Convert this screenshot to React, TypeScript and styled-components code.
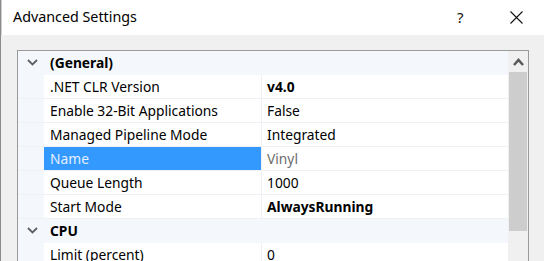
import React from 'react';
import styled, { createGlobalStyle } from 'styled-components';

interface Property {
  name: string;
  value?: string;
  bold?: boolean;
  readOnly?: boolean;
  selected?: boolean;
}

interface Category {
  title: string;
  properties: Property[];
}

const categories: Category[] = [
  {
    title: '(General)',
    properties: [
      { name: '.NET CLR Version', value: 'v4.0', bold: true },
      { name: 'Enable 32-Bit Applications', value: 'False' },
      { name: 'Managed Pipeline Mode', value: 'Integrated' },
      { name: 'Name', value: 'Vinyl', readOnly: true, selected: true },
      { name: 'Queue Length', value: '1000' },
      { name: 'Start Mode', value: 'AlwaysRunning', bold: true }
    ]
  },
  {
    title: 'CPU',
    properties: [{ name: 'Limit (percent)', value: '0' }]
  }
];

const GlobalStyle = createGlobalStyle`
  html, body {
    margin: 0;
    padding: 0;
    background: #f0f0f0;
  }
  body {
    font-family: "Noto Sans", "Open Sans", sans-serif;
    color: #000;
  }
`;

const ChevronDown: React.FC = () => (
  <svg width="11" height="7" viewBox="0 0 11 7">
    <path d="M1 1 L5.5 5.5 L10 1" fill="none" stroke="#5f5f5f" strokeWidth="1.8" />
  </svg>
);

const ChevronUp: React.FC = () => (
  <svg width="11" height="8" viewBox="0 0 11 8">
    <path d="M1 7 L5.5 2 L10 7" fill="none" stroke="#5a5a5a" strokeWidth="2.6" />
  </svg>
);

const CloseIcon: React.FC = () => (
  <svg width="13" height="13" viewBox="0 0 13 13">
    <path d="M0.5 0.5 L12.5 12.5 M12.5 0.5 L0.5 12.5" stroke="#111" strokeWidth="1.1" />
  </svg>
);

const App: React.FC = () => {
  return (
    <>
      <GlobalStyle />
      <Window>
        <TitleBar>
          <Title>Advanced Settings</Title>
          <TitleButtons>
            <HelpButton>?</HelpButton>
            <CloseButton>
              <CloseIcon />
            </CloseButton>
          </TitleButtons>
        </TitleBar>
        <Body>
          <GridBox>
            <Rows>
              {categories.map((cat) => (
                <React.Fragment key={cat.title}>
                  <CategoryRow>
                    <Margin>
                      <ChevronDown />
                    </Margin>
                    <CategoryTitle>{cat.title}</CategoryTitle>
                  </CategoryRow>
                  {cat.properties.map((p) => (
                    <PropertyRow key={p.name}>
                      <Margin />
                      <NameCell $selected={p.selected}>{p.name}</NameCell>
                      <ValueCell $bold={p.bold} $readOnly={p.readOnly}>
                        {p.value}
                      </ValueCell>
                    </PropertyRow>
                  ))}
                </React.Fragment>
              ))}
            </Rows>
            <ScrollBar>
              <ScrollArrow>
                <ChevronUp />
              </ScrollArrow>
              <ScrollThumb />
            </ScrollBar>
          </GridBox>
        </Body>
      </Window>
    </>
  );
};

const Window = styled.div`
  width: 544px;
  height: 261px;
  overflow: hidden;
  display: flex;
  flex-direction: column;
  border-left: 1px solid #8a8a8a;
  box-sizing: border-box;
  box-shadow: inset 1px 0 0 #d0d0d0;
`;

const TitleBar = styled.div`
  height: 35px;
  flex: none;
  background: #ffffff;
  display: flex;
  align-items: center;
  padding-left: 11px;
  margin-left: 1px;
`;

const Title = styled.div`
  font-size: 14.3px;
  color: #000;
  flex: 1;
  padding-bottom: 2px;
`;

const TitleButtons = styled.div`
  display: flex;
  align-items: center;
  padding-bottom: 1px;
`;

const HelpButton = styled.div`
  font-size: 15px;
  width: 10px;
  margin-right: 43px;
  color: #111;
`;

const CloseButton = styled.div`
  width: 13px;
  height: 13px;
  margin-right: 21px;
  display: flex;
`;

const Body = styled.div`
  flex: 1;
  background: #f0f0f0;
  padding: 15px 14px 0 16px;
`;

const GridBox = styled.div`
  width: 512px;
  height: 230px;
  box-sizing: border-box;
  border: 1px solid #9a9a9a;
  border-bottom: none;
  display: flex;
  background: #ffffff;
  overflow: hidden;
`;

const Rows = styled.div`
  width: 490px;
  display: flex;
  flex-direction: column;
`;

const RowBase = styled.div`
  height: 24px;
  flex: none;
  box-sizing: border-box;
  display: grid;
  grid-template-columns: 26px 218px 1fr;
  font-size: 13.8px;
  line-height: 23px;
  border-bottom: 1px solid #f0f1f5;
`;

const CategoryRow = styled(RowBase)`
  background: #f4f7fc;
  font-weight: 700;
  border-bottom-color: #f4f7fc;
`;

const CategoryTitle = styled.div`
  grid-column: 2 / 4;
  padding-left: 6px;
`;

const PropertyRow = styled(RowBase)``;

const Margin = styled.div`
  background: #f4f7fc;
  display: flex;
  align-items: center;
  justify-content: center;
  padding-left: 2px;
`;

const NameCell = styled.div<{ $selected?: boolean }>`
  padding-left: 6px;
  border-right: 1px solid #f0f1f5;
  white-space: nowrap;
  overflow: hidden;
  background: ${(p) => (p.$selected ? '#3399ff' : 'transparent')};
  color: ${(p) => (p.$selected ? '#e4efff' : '#000')};
`;

const ValueCell = styled.div<{ $bold?: boolean; $readOnly?: boolean }>`
  padding-left: 5px;
  white-space: nowrap;
  font-weight: ${(p) => (p.$bold ? 700 : 400)};
  color: ${(p) => (p.$readOnly ? '#6d6d6d' : '#000')};
`;

const ScrollBar = styled.div`
  width: 20px;
  background: #f0f0f0;
  display: flex;
  flex-direction: column;
`;

const ScrollArrow = styled.div`
  height: 21px;
  display: flex;
  align-items: center;
  justify-content: center;
`;

const ScrollThumb = styled.div`
  height: 159px;
  margin: 0 1px 0 1px;
  background: #cdcdcd;
`;

export default App;
